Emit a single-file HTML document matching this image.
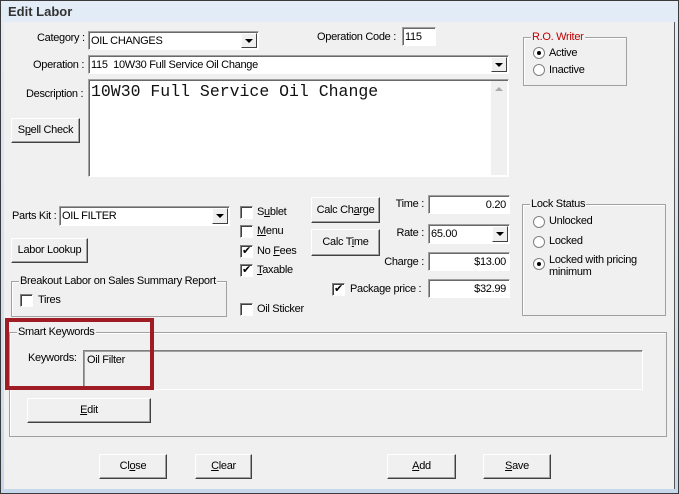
<!DOCTYPE html>
<html><head><style>
*{box-sizing:border-box;margin:0;padding:0}
body{width:679px;height:494px;overflow:hidden;background:#000;font-family:"Liberation Sans",sans-serif;font-size:11px;letter-spacing:-0.3px;color:#000;position:relative}
.frame{position:absolute;left:0;top:0;width:679px;height:494px;background:linear-gradient(#e3ecf7,#c8d8ec);border:1px solid #3a3a3a;}
.content{position:absolute;left:4px;top:22px;width:671px;height:467px;background:#f0f0f0;border-right:1px solid #555;}
.a{position:absolute;white-space:nowrap}
.title{position:absolute;left:7px;top:3px;font-weight:bold;font-size:13px;color:#333;letter-spacing:0}
.sunk{position:absolute;background:#fff;border:1px solid;border-color:#a0a0a0 #fff #fff #a0a0a0;box-shadow:inset 1px 1px 0 #696969}
.sunk>span{top:3px!important}
.btn{position:absolute;background:#f0f0f0;border:1px solid;border-color:#fff #404040 #404040 #fff;box-shadow:inset -1px -1px 0 #a0a0a0;text-align:center;font-size:11px}
.dd{position:absolute;right:1px;top:1px;bottom:1px;width:16px;background:#f0f0f0;border:1px solid;border-color:#fff #404040 #404040 #fff}
.dd:after{content:"";position:absolute;left:3px;top:5px;border-left:4px solid transparent;border-right:4px solid transparent;border-top:4px solid #000}
.grp{position:absolute;border:1px solid #a0a0a0;box-shadow:1px 1px 0 #fff inset}
.lg{position:absolute;top:-7px;left:7px;background:#f0f0f0;padding:0 1px;white-space:nowrap}
.cb{position:absolute;width:13px;height:13px;background:#fff;border:1px solid;border-color:#808080 #fff #fff #808080;box-shadow:inset 1px 1px 0 #404040}
.cb.c:after{content:"✔";position:absolute;left:1px;top:-2px;font-size:11px}
.rb{position:absolute;width:12px;height:12px;border-radius:50%;background:#fff;border:1px solid #808080}
.rb.c:after{content:"";position:absolute;left:3px;top:3px;width:4px;height:4px;border-radius:50%;background:#000}
.r{text-align:right}
</style></head><body>
<div class="frame"><div class="title">Edit Labor</div></div>
<div class="content"></div>

<div class="a" style="left:37px;top:32px">Category :</div>
<div class="sunk" style="left:88px;top:31px;width:171px;height:19px"><span class="a" style="left:2px">OIL CHANGES</span><div class="dd"></div></div>
<div class="a" style="left:317px;top:31px">Operation Code :</div>
<div class="sunk" style="left:402px;top:27px;width:34px;height:19px"><span class="a" style="left:2px">115</span></div>

<div class="a" style="left:33px;top:59px">Operation :</div>
<div class="sunk" style="left:88px;top:55px;width:421px;height:19px"><span class="a" style="left:2px">115&nbsp; 10W30 Full Service Oil Change</span><div class="dd"></div></div>

<div class="a" style="left:26px;top:88px">Description :</div>
<div class="sunk" style="left:88px;top:79px;width:421px;height:98px"><span class="a" style="left:2px;top:2px!important;font-family:'Liberation Mono',monospace;font-size:16.5px;letter-spacing:0;color:#111">10W30 Full Service Oil Change</span>
<div class="a" style="right:1px;top:1px;bottom:1px;width:16px;background:#f0f0f0"><div class="a" style="left:4px;top:6px;border-left:4px solid transparent;border-right:4px solid transparent;border-bottom:4px solid #aaa"></div></div></div>
<div class="btn" style="left:11px;top:118px;width:69px;height:25px;line-height:23px">S<u>p</u>ell Check</div>

<div class="grp" style="left:523px;top:37px;width:104px;height:49px"><span class="lg" style="color:#c00000">R.O. Writer</span></div>
<div class="rb c" style="left:533px;top:47px"></div><div class="a" style="left:549px;top:47px">Active</div>
<div class="rb" style="left:533px;top:64px"></div><div class="a" style="left:549px;top:64px">Inactive</div>

<div class="a" style="left:12px;top:210px">Parts Kit :</div>
<div class="sunk" style="left:59px;top:206px;width:171px;height:20px"><span class="a" style="left:2px">OIL FILTER</span><div class="dd"></div></div>
<div class="btn" style="left:11px;top:238px;width:77px;height:25px;line-height:23px">Labor Lookup</div>
<div class="grp" style="left:11px;top:281px;width:216px;height:36px"><span class="lg">Breakout Labor on Sales Summary Report</span></div>
<div class="cb" style="left:20px;top:294px"></div><div class="a" style="left:38px;top:294px">Tires</div>

<div class="cb" style="left:240px;top:206px"></div><div class="a" style="left:257px;top:206px">S<u>u</u>blet</div>
<div class="cb" style="left:240px;top:225px"></div><div class="a" style="left:257px;top:225px"><u>M</u>enu</div>
<div class="cb c" style="left:240px;top:245px"></div><div class="a" style="left:257px;top:245px">No <u>F</u>ees</div>
<div class="cb c" style="left:240px;top:264px"></div><div class="a" style="left:257px;top:264px"><u>T</u>axable</div>
<div class="cb" style="left:240px;top:303px"></div><div class="a" style="left:257px;top:303px">Oil Sticker</div>

<div class="btn" style="left:311px;top:197px;width:69px;height:26px;line-height:24px">Calc Ch<u>a</u>rge</div>
<div class="btn" style="left:311px;top:229px;width:69px;height:27px;line-height:25px">Calc T<u>i</u>me</div>

<div class="a r" style="left:380px;width:44px;top:198px">Time :</div>
<div class="sunk" style="left:428px;top:195px;width:82px;height:19px"><span class="a" style="right:3px">0.20</span></div>
<div class="a r" style="left:380px;width:44px;top:227px">Rate :</div>
<div class="sunk" style="left:428px;top:224px;width:82px;height:20px"><span class="a" style="left:2px">65.00</span><div class="dd"></div></div>
<div class="a r" style="left:370px;width:54px;top:256px">Charge :</div>
<div class="sunk" style="left:428px;top:252px;width:82px;height:19px"><span class="a" style="right:3px">$13.00</span></div>
<div class="cb c" style="left:332px;top:283px"></div><div class="a" style="left:350px;top:283px">Package price :</div>
<div class="sunk" style="left:428px;top:279px;width:82px;height:19px"><span class="a" style="right:3px">$32.99</span></div>

<div class="grp" style="left:522px;top:204px;width:144px;height:112px"><span class="lg">Lock Status</span></div>
<div class="rb" style="left:533px;top:216px"></div><div class="a" style="left:549px;top:215px">Unlocked</div>
<div class="rb" style="left:533px;top:236px"></div><div class="a" style="left:549px;top:235px">Locked</div>
<div class="rb c" style="left:533px;top:258px"></div><div class="a" style="left:549px;top:254px;line-height:12px">Locked with pricing<br>minimum</div>

<div class="grp" style="left:9px;top:332px;width:658px;height:105px"><span class="lg">Smart Keywords</span></div>
<div class="a" style="left:28px;top:352px">Keywords:</div>
<div class="a" style="left:83px;top:350px;width:560px;height:40px;border:1px solid;border-color:#808080 #fff #fff #808080;box-shadow:inset 1px 1px 0 #a0a0a0"><span class="a" style="left:3px;top:3px">Oil Filter</span></div>
<div class="btn" style="left:27px;top:398px;width:124px;height:25px;line-height:23px"><u>E</u>dit</div>
<div class="a" style="left:5px;top:318px;width:149px;height:72px;border:4px solid #a01c24"></div>

<div class="btn" style="left:99px;top:454px;width:68px;height:25px;line-height:23px">Cl<u>o</u>se</div>
<div class="btn" style="left:195px;top:454px;width:57px;height:25px;line-height:23px"><u>C</u>lear</div>
<div class="btn" style="left:387px;top:454px;width:69px;height:25px;line-height:23px"><u>A</u>dd</div>
<div class="btn" style="left:483px;top:454px;width:68px;height:25px;line-height:23px"><u>S</u>ave</div>
</body></html>
